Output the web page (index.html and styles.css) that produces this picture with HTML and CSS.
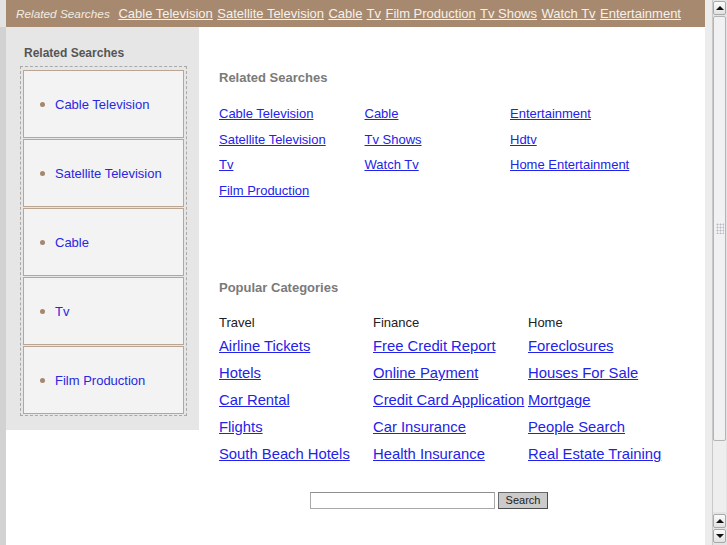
FILE: index.html
```html
<!DOCTYPE html>
<html>
<head>
<meta charset="utf-8">
<title>Related Searches</title>
<link rel="stylesheet" href="styles.css">
</head>
<body>
<div class="shell">
  <div class="edge"></div>
  <div class="page">
    <div class="topbar">
      <span class="topbar-label">Related Searches</span>
      <a href="#">Cable Television</a>
      <a href="#">Satellite Television</a>
      <a href="#">Cable</a>
      <a href="#">Tv</a>
      <a href="#">Film Production</a>
      <a href="#">Tv Shows</a>
      <a href="#">Watch Tv</a>
      <a href="#">Entertainment</a>
    </div>
    <div class="content">
      <aside class="sidebar">
        <div class="side-title">Related Searches</div>
        <ul class="side-list">
          <li class="side-item"><a href="#">Cable Television</a></li>
          <li class="side-item"><a href="#">Satellite Television</a></li>
          <li class="side-item"><a href="#">Cable</a></li>
          <li class="side-item"><a href="#">Tv</a></li>
          <li class="side-item"><a href="#">Film Production</a></li>
        </ul>
      </aside>
      <main class="main">
        <h2 class="section-title">Related Searches</h2>
        <div class="related">
          <div class="related-col">
            <a href="#">Cable Television</a>
            <a href="#">Satellite Television</a>
            <a href="#">Tv</a>
            <a href="#">Film Production</a>
          </div>
          <div class="related-col">
            <a href="#">Cable</a>
            <a href="#">Tv Shows</a>
            <a href="#">Watch Tv</a>
          </div>
          <div class="related-col">
            <a href="#">Entertainment</a>
            <a href="#">Hdtv</a>
            <a href="#">Home Entertainment</a>
          </div>
        </div>
        <h2 class="section-title popular-title">Popular Categories</h2>
        <div class="popular">
          <div class="pop-col">
            <div class="pop-head">Travel</div>
            <a href="#">Airline Tickets</a>
            <a href="#">Hotels</a>
            <a href="#">Car Rental</a>
            <a href="#">Flights</a>
            <a href="#">South Beach Hotels</a>
          </div>
          <div class="pop-col">
            <div class="pop-head">Finance</div>
            <a href="#">Free Credit Report</a>
            <a href="#">Online Payment</a>
            <a href="#">Credit Card Application</a>
            <a href="#">Car Insurance</a>
            <a href="#">Health Insurance</a>
          </div>
          <div class="pop-col">
            <div class="pop-head">Home</div>
            <a href="#">Foreclosures</a>
            <a href="#">Houses For Sale</a>
            <a href="#">Mortgage</a>
            <a href="#">People Search</a>
            <a href="#">Real Estate Training</a>
          </div>
        </div>
        <form class="search" onsubmit="return false;">
          <input class="search-input" type="text">
          <button class="search-btn" type="submit">Search</button>
        </form>
      </main>
    </div>
  </div>
  <div class="gutter"></div>
  <div class="scrollbar">
    <div class="sb-btn"><span class="arrow-up"></span></div>
    <div class="sb-thumb"><span class="sb-grip"></span></div>
    <div class="sb-track"></div>
    <div class="sb-btn"><span class="arrow-up"></span></div>
    <div class="sb-btn"><span class="arrow-down"></span></div>
  </div>
</div>
</body>
</html>
```

FILE: styles.css
```css
html, body {
  margin: 0;
  padding: 0;
  background: #ffffff;
}

body {
  font-family: "Liberation Sans", Arial, sans-serif;
  font-size: 13px;
  color: #222;
  overflow: hidden;
}

.shell {
  display: grid;
  grid-template-columns: 6px 699px 7px 15px;
  height: 545px;
}

.edge {
  background: linear-gradient(#e3e3e3 0, #e3e3e3 27px, #d2d2d2 27px, #d2d2d2 100%);
}

.gutter {
  background: #ececec;
}

.page {
  display: flex;
  flex-direction: column;
  background: #fff;
}

/* top bar */
.topbar {
  height: 27px;
  line-height: 27px;
  background: #a7896f;
  padding-left: 10px;
  white-space: nowrap;
  overflow: hidden;
  color: #f4eee8;
  font-size: 13px;
}

.topbar-label {
  font-style: italic;
  font-size: 11.8px;
  color: #f1ebe4;
  margin-right: 5px;
}

.topbar a {
  color: #f6f1eb;
  text-decoration: underline;
  margin-right: 0.8px;
  font-size: 13px;
}

.content {
  display: flex;
  flex: 1;
  align-items: flex-start;
}

/* sidebar */
.sidebar {
  width: 193px;
  box-sizing: border-box;
  background: #e6e6e6;
  padding: 19px 12px 14px 14px;
}

.side-title {
  font-size: 12px;
  font-weight: bold;
  color: #555;
  line-height: 15px;
  margin: 0 0 5px 4px;
}

.side-list {
  list-style: none;
  margin: 0;
  padding: 3px 2px 1px 2px;
  border: 1px dashed #a9a9a9;
  display: flex;
  flex-direction: column;
  gap: 1px;
}

.side-item {
  height: 68px;
  box-sizing: border-box;
  border: 1px solid #b9a592;
  background: #f3f3f3;
  display: flex;
  align-items: center;
  padding-left: 16px;
}

.side-item::before {
  content: "";
  width: 5px;
  height: 5px;
  border-radius: 50%;
  background: #a4876f;
  margin-right: 10px;
  flex: none;
}

.side-item a {
  color: #2828e0;
  text-decoration: none;
  font-size: 13px;
}

/* main */
.main {
  flex: 1;
  padding: 43px 20px 0 20px;
}

.section-title {
  font-size: 13px;
  font-weight: bold;
  color: #7a7a7a;
  line-height: 16px;
  margin: 0 0 15px 0;
}

.related {
  display: grid;
  grid-template-columns: 145.5px 145.5px auto;
}

.related-col {
  display: flex;
  flex-direction: column;
}

.related-col a {
  line-height: 25.5px;
  font-size: 13px;
  color: #2323e8;
  text-decoration: underline;
  align-self: flex-start;
}

.popular-title {
  margin-top: 77px;
  margin-bottom: 19px;
}

.popular {
  display: grid;
  grid-template-columns: 154px 155px auto;
}

.pop-col {
  display: flex;
  flex-direction: column;
}

.pop-head {
  font-size: 13px;
  line-height: 16px;
  color: #222;
  margin-bottom: 2px;
}

.pop-col a {
  font-size: 14.8px;
  line-height: 27px;
  color: #2323e8;
  text-decoration: underline;
  align-self: flex-start;
  white-space: nowrap;
}

.search {
  display: flex;
  gap: 3px;
  margin: 24px 0 0 91px;
}

.search-input {
  width: 185px;
  height: 17px;
  box-sizing: border-box;
  border: 1px solid #a8a8a8;
  border-top-color: #8f8f8f;
  background: #fff;
  margin: 0;
  padding: 0 2px;
}

.search-btn {
  width: 50px;
  height: 17px;
  box-sizing: border-box;
  margin: 0;
  padding: 0;
  background: #cbcbcb;
  border: 1px solid #4d4d4d;
  border-top-color: #6a6a6a;
  border-left-color: #6a6a6a;
  font-family: "Liberation Sans", Arial, sans-serif;
  font-size: 11px;
  color: #222;
  line-height: 15px;
}

/* scrollbar */
.scrollbar {
  display: flex;
  flex-direction: column;
  background: #e4e4e4;
  border-left: 1px solid #c9c9c9;
  box-sizing: border-box;
  padding: 1px 1px 1px 0;
}

.sb-btn {
  height: 14px;
  box-sizing: border-box;
  border: 1px solid #a9a9a9;
  border-radius: 2px;
  background: linear-gradient(#fbfbfb, #e2e2e2);
  display: flex;
  align-items: center;
  justify-content: center;
  margin-bottom: 1px;
}

.arrow-up {
  width: 0;
  height: 0;
  border-left: 4px solid transparent;
  border-right: 4px solid transparent;
  border-bottom: 4px solid #111;
}

.arrow-down {
  width: 0;
  height: 0;
  border-left: 4px solid transparent;
  border-right: 4px solid transparent;
  border-top: 4px solid #111;
}

.sb-thumb {
  height: 425px;
  box-sizing: border-box;
  border: 1px solid #b4b4b4;
  border-radius: 2px;
  background: #f1f1f4;
  display: flex;
  align-items: center;
  justify-content: center;
}

.sb-grip {
  width: 8px;
  height: 11px;
  background-image: radial-gradient(circle, #b8b8c4 0.9px, transparent 1.1px);
  background-size: 3px 3px;
}

.sb-track {
  flex: 1;
  background: #eeeeee;
  margin-bottom: 2px;
}
```
